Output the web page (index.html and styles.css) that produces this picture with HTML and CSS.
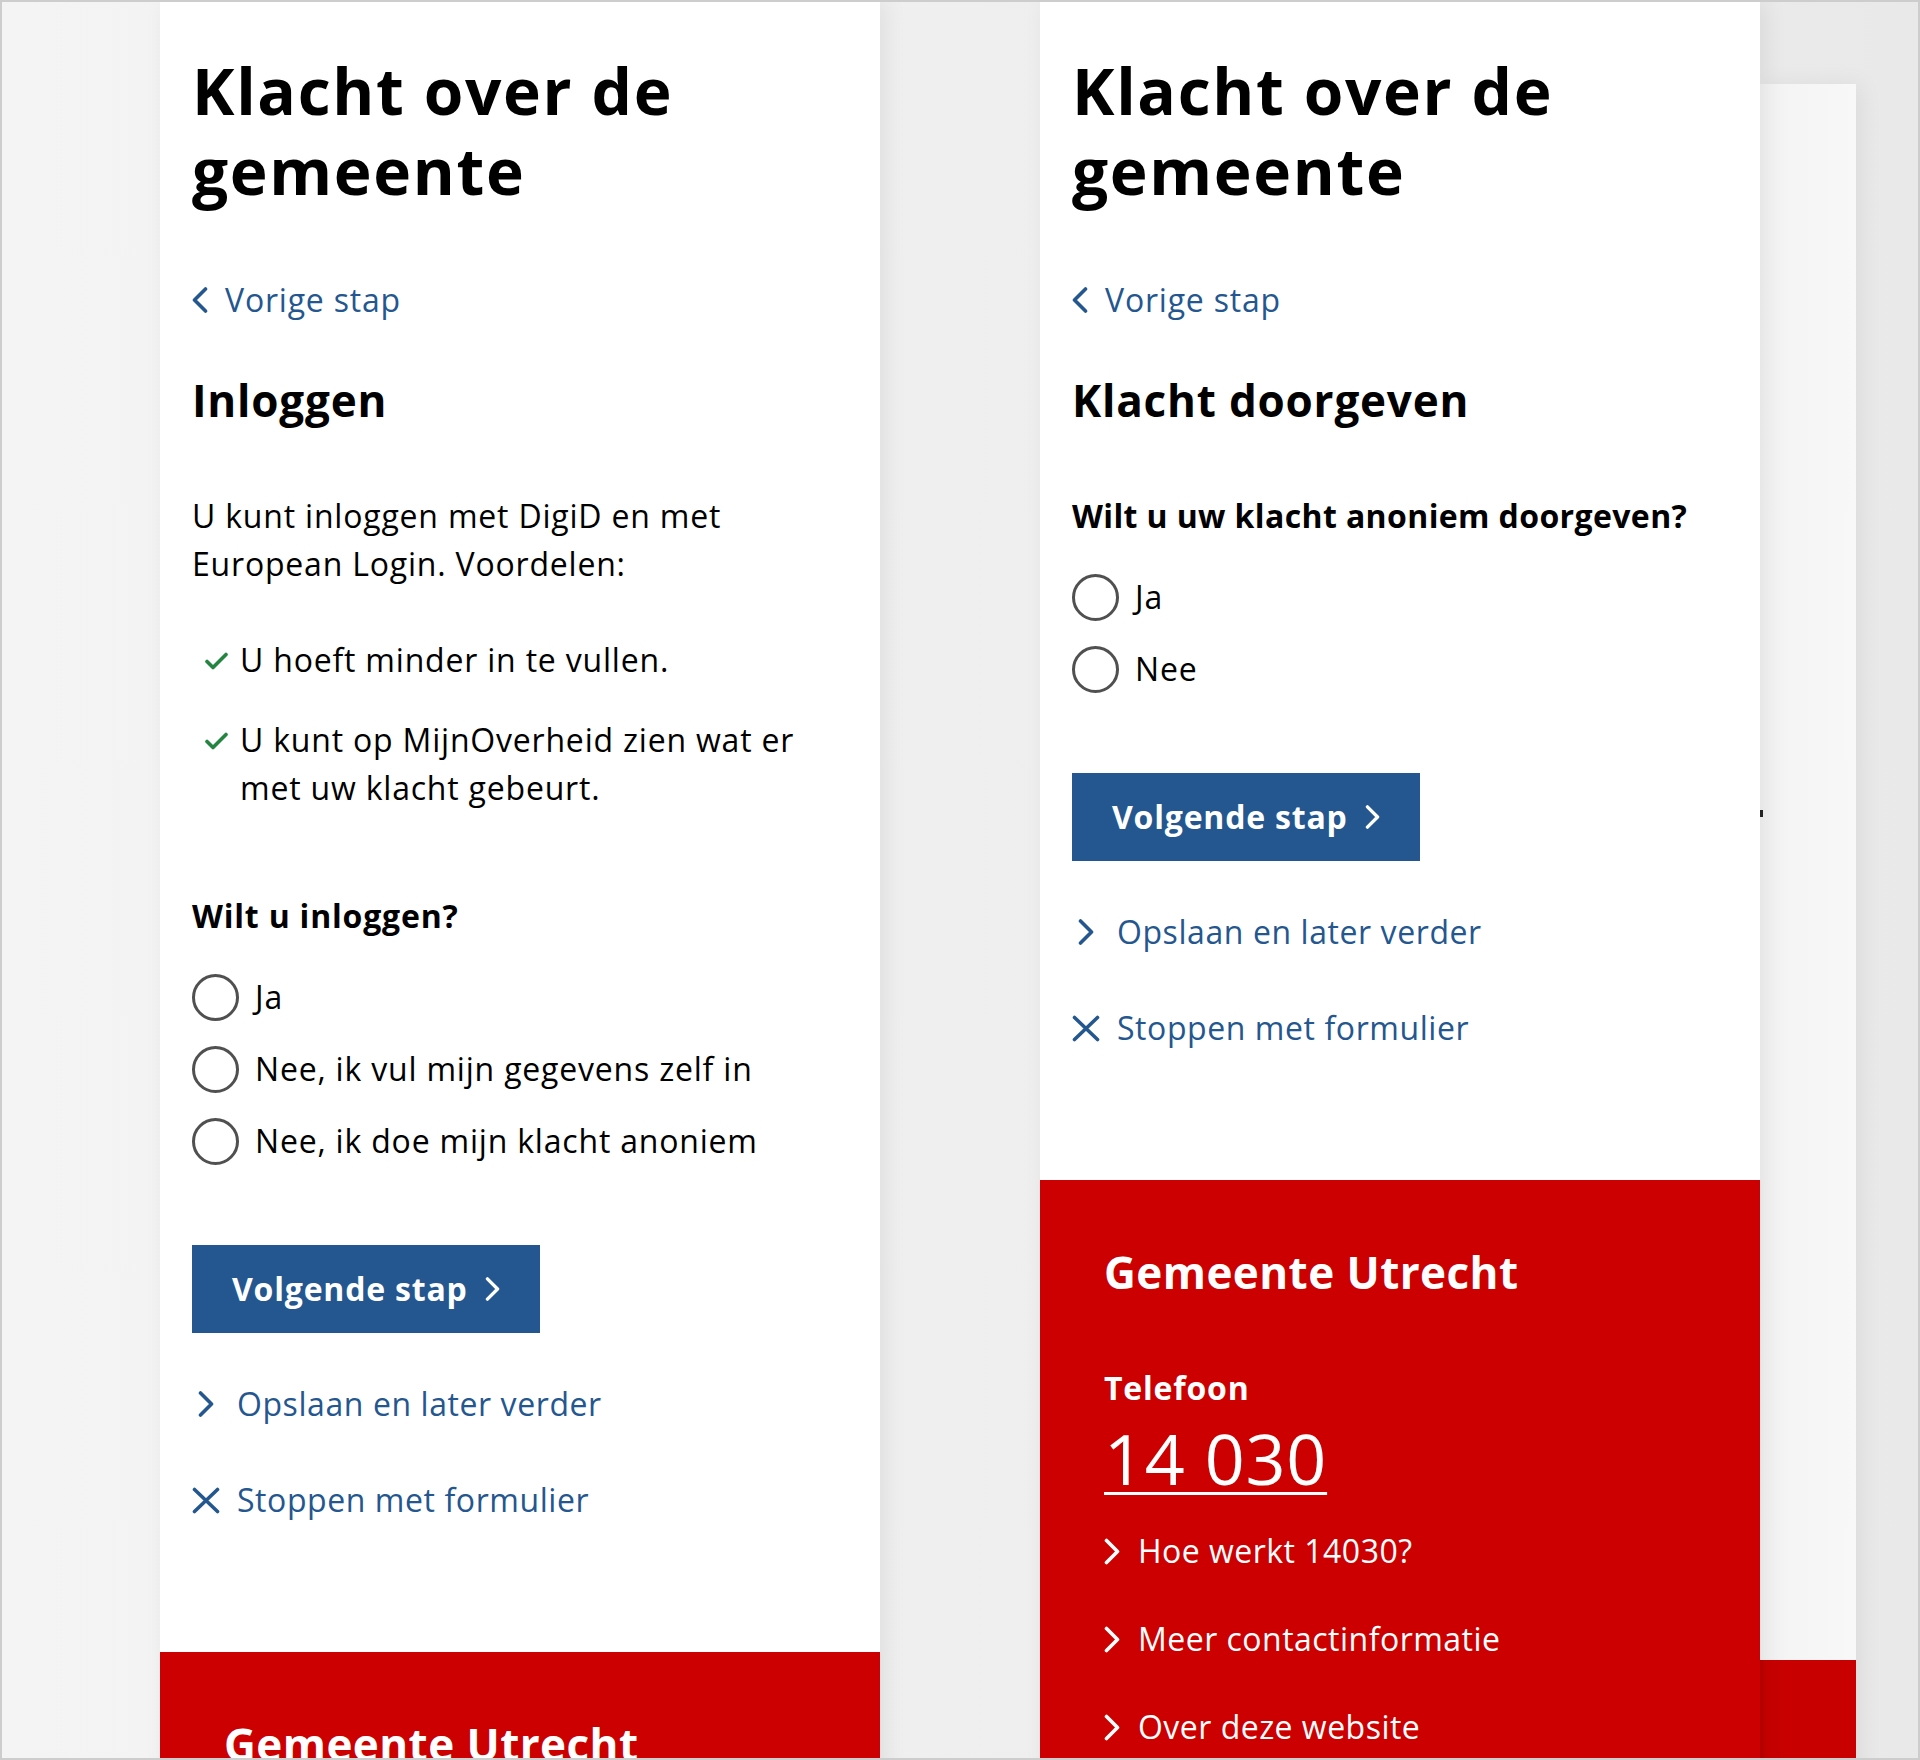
FILE: index.html
```html
<!DOCTYPE html>
<html lang="nl">
<head>
<meta charset="utf-8">
<title>Klacht over de gemeente</title>
<link rel="stylesheet" href="styles.css">
</head>
<body>
<div class="frame">
  <main class="phone">
    <div class="content">
      <h1 class="title">Klacht over de gemeente</h1>
      <a class="back-link" href="#"><svg class="chev" viewBox="0 0 16 26" width="16" height="26"><path d="M13.5 2 L2.5 13 L13.5 24"/></svg>Vorige stap</a>
      <h2 class="step-title">Inloggen</h2>
      <p class="intro">U kunt inloggen met DigiD en met European Login. Voordelen:</p>
      <ul class="checklist">
        <li><svg class="check" viewBox="0 0 23 18" width="23" height="18"><path d="M2 9.5 L8 15.5 L21 2.5"/></svg><span class="check-text">U hoeft minder in te vullen.</span></li>
        <li><svg class="check" viewBox="0 0 23 18" width="23" height="18"><path d="M2 9.5 L8 15.5 L21 2.5"/></svg><span class="check-text">U kunt op MijnOverheid zien wat er met uw klacht gebeurt.</span></li>
      </ul>
      <div class="question" role="radiogroup">
        <div class="question-label">Wilt u inloggen?</div>
        <label class="radio"><span class="radio-circle"></span>Ja</label>
        <label class="radio"><span class="radio-circle"></span>Nee, ik vul mijn gegevens zelf in</label>
        <label class="radio"><span class="radio-circle"></span>Nee, ik doe mijn klacht anoniem</label>
      </div>
      <button class="btn-primary" type="button">Volgende stap<svg class="chev chev-btn" viewBox="0 0 16 26" width="15" height="24"><path d="M2.5 2 L13.5 13 L2.5 24"/></svg></button>
      <ul class="actions">
        <li><a class="action" href="#"><span class="action-icon"><svg class="chev chev-action" viewBox="0 0 16 26" width="16" height="26"><path d="M2.5 2 L13.5 13 L2.5 24"/></svg></span>Opslaan en later verder</a></li>
        <li><a class="action" href="#"><span class="action-icon"><svg class="cross" viewBox="0 0 28 27" width="28" height="27"><path d="M2.5 2.5 L25.5 24.5 M25.5 2.5 L2.5 24.5"/></svg></span>Stoppen met formulier</a></li>
      </ul>
    </div>
    <footer class="site-footer">
      <h2 class="footer-title">Gemeente Utrecht</h2>
      <div class="footer-label">Telefoon</div>
      <a class="phone-number" href="#">14 030</a>
      <ul class="footer-links">
        <li><a href="#"><svg class="chev chev-footer" viewBox="0 0 16 26" width="16" height="27"><path d="M2.5 2 L13.5 13 L2.5 24"/></svg>Hoe werkt 14030?</a></li>
        <li><a href="#"><svg class="chev chev-footer" viewBox="0 0 16 26" width="16" height="27"><path d="M2.5 2 L13.5 13 L2.5 24"/></svg>Meer contactinformatie</a></li>
        <li><a href="#"><svg class="chev chev-footer" viewBox="0 0 16 26" width="16" height="27"><path d="M2.5 2 L13.5 13 L2.5 24"/></svg>Over deze website</a></li>
      </ul>
    </footer>
  </main>

  <main class="phone">
    <div class="content">
      <h1 class="title">Klacht over de gemeente</h1>
      <a class="back-link" href="#"><svg class="chev" viewBox="0 0 16 26" width="16" height="26"><path d="M13.5 2 L2.5 13 L13.5 24"/></svg>Vorige stap</a>
      <h2 class="step-title">Klacht doorgeven</h2>
      <div class="question" role="radiogroup">
        <div class="question-label question-label-tight">Wilt u uw klacht anoniem doorgeven?</div>
        <label class="radio"><span class="radio-circle"></span>Ja</label>
        <label class="radio"><span class="radio-circle"></span>Nee</label>
      </div>
      <button class="btn-primary" type="button">Volgende stap<svg class="chev chev-btn" viewBox="0 0 16 26" width="15" height="24"><path d="M2.5 2 L13.5 13 L2.5 24"/></svg></button>
      <ul class="actions">
        <li><a class="action" href="#"><span class="action-icon"><svg class="chev chev-action" viewBox="0 0 16 26" width="16" height="26"><path d="M2.5 2 L13.5 13 L2.5 24"/></svg></span>Opslaan en later verder</a></li>
        <li><a class="action" href="#"><span class="action-icon"><svg class="cross" viewBox="0 0 28 27" width="28" height="27"><path d="M2.5 2.5 L25.5 24.5 M25.5 2.5 L2.5 24.5"/></svg></span>Stoppen met formulier</a></li>
      </ul>
    </div>
    <footer class="site-footer">
      <h2 class="footer-title">Gemeente Utrecht</h2>
      <div class="footer-label">Telefoon</div>
      <a class="phone-number" href="#">14 030</a>
      <ul class="footer-links">
        <li><a href="#"><svg class="chev chev-footer" viewBox="0 0 16 26" width="16" height="27"><path d="M2.5 2 L13.5 13 L2.5 24"/></svg>Hoe werkt 14030?</a></li>
        <li><a href="#"><svg class="chev chev-footer" viewBox="0 0 16 26" width="16" height="27"><path d="M2.5 2 L13.5 13 L2.5 24"/></svg>Meer contactinformatie</a></li>
        <li><a href="#"><svg class="chev chev-footer" viewBox="0 0 16 26" width="16" height="27"><path d="M2.5 2 L13.5 13 L2.5 24"/></svg>Over deze website</a></li>
      </ul>
    </footer>
    <span class="edge-mark"></span>
  </main>

  <div class="stack-card">
    <div class="stack-card-footer"></div>
  </div>
</div>
</body>
</html>
```

FILE: styles.css
```css
* { box-sizing: border-box; }

html, body {
  margin: 0;
  padding: 0;
}

body {
  font-family: "Open Sans", "Noto Sans", sans-serif;
  font-size: 32px;
  line-height: 48px;
  letter-spacing: 0.025em;
  color: #000;
}

.frame {
  width: 1920px;
  height: 1760px;
  border: 2px solid #cdcdcd;
  background: linear-gradient(90deg, #f4f4f4 0%, #efefef 50%, #e9e9e9 100%);
  display: flex;
  align-items: flex-start;
  padding-left: 158px;
  gap: 160px;
  overflow: hidden;
}

.phone {
  width: 720px;
  flex: 0 0 720px;
  background: #fff;
  box-shadow: 6px 0 22px rgba(0, 0, 0, 0.07);
  position: relative;
  z-index: 2;
}

.content {
  padding: 49px 32px 128px;
}

.title {
  margin: 0 0 65px;
  font-size: 64px;
  line-height: 80px;
  font-weight: 700;
  letter-spacing: 0.026em;
}

.back-link {
  display: flex;
  align-items: center;
  gap: 17px;
  height: 48px;
  color: #24578f;
  text-decoration: none;
  margin-bottom: 48px;
}

.chev path,
.cross path,
.check path {
  fill: none;
  stroke-width: 3.6;
  stroke-linecap: round;
  stroke-linejoin: round;
}

.chev path,
.cross path { stroke: #24578f; }

.step-title {
  margin: 0 0 64px;
  font-size: 44px;
  line-height: 56px;
  font-weight: 700;
}

.intro {
  margin: 0 0 48px;
}

.checklist {
  list-style: none;
  margin: 0 0 80px;
  padding: 0;
}

.checklist li {
  display: flex;
  align-items: flex-start;
  padding-left: 13px;
}

.checklist li + li {
  margin-top: 32px;
}

.check {
  flex: 0 0 23px;
  margin-top: 16px;
  margin-right: 12px;
}

.check path { stroke: #23853f; }

.check-text {
  max-width: 592px;
}

.question {
  margin-bottom: 80px;
}

.question-label {
  font-weight: 700;
  margin-bottom: 33px;
}

.question-label-tight {
  letter-spacing: 0.012em;
}

.radio {
  display: flex;
  align-items: center;
  gap: 16px;
  height: 48px;
}

.radio + .radio {
  margin-top: 24px;
}

.radio-circle {
  width: 47px;
  height: 47px;
  border: 3px solid #505050;
  border-radius: 50%;
  flex: 0 0 47px;
}

.btn-primary {
  display: inline-flex;
  align-items: center;
  gap: 17px;
  padding: 20px 40px;
  border: 0;
  background: #24578f;
  color: #fff;
  font-family: inherit;
  font-size: 32px;
  line-height: 48px;
  font-weight: 700;
  letter-spacing: 0.025em;
  margin: 0;
}

.chev-btn path { stroke: #fff; }

.actions {
  list-style: none;
  margin: 47px 0 0;
  padding: 0;
}

.actions li + li {
  margin-top: 48px;
}

.action {
  display: flex;
  align-items: center;
  height: 48px;
  color: #24578f;
  text-decoration: none;
  letter-spacing: 0.018em;
}

.action-icon {
  width: 32px;
  margin-right: 13px;
  display: flex;
  align-items: center;
}

.chev-action {
  margin-left: 6px;
}

.site-footer {
  background: #cc0000;
  color: #fff;
  padding: 64px 64px 80px;
}

.footer-title {
  margin: 0 0 64px;
  font-size: 44px;
  line-height: 56px;
  font-weight: 700;
  letter-spacing: 0.01em;
}

.footer-label {
  font-weight: 700;
}

.phone-number {
  display: inline-block;
  margin-top: 6px;
  color: #fff;
  font-size: 70px;
  line-height: 80px;
  text-decoration: underline;
  text-decoration-thickness: 3px;
  text-underline-offset: 7px;
}

.footer-links {
  list-style: none;
  margin: 29px 0 0;
  padding: 0;
}

.footer-links li + li {
  margin-top: 40px;
}

.footer-links a {
  display: flex;
  align-items: center;
  gap: 18px;
  height: 48px;
  color: #fff;
  text-decoration: none;
  letter-spacing: 0.015em;
}

.chev-footer path { stroke: #fff; }

.edge-mark {
  position: absolute;
  left: 720px;
  top: 808px;
  width: 3px;
  height: 7px;
  background: #222;
}

.stack-card {
  width: 96px;
  flex: 0 0 96px;
  margin-top: 82px;
  margin-left: -160px;
  height: 1700px;
  background: linear-gradient(90deg, #f3f3f3, #f8f8f8);
  box-shadow: 6px 0 22px rgba(0, 0, 0, 0.06);
  position: relative;
  z-index: 1;
}

.stack-card-footer {
  margin-top: 1576px;
  height: 200px;
  background: linear-gradient(90deg, #b80000 0, #c80000 6px, #c80000 100%);
}
```
